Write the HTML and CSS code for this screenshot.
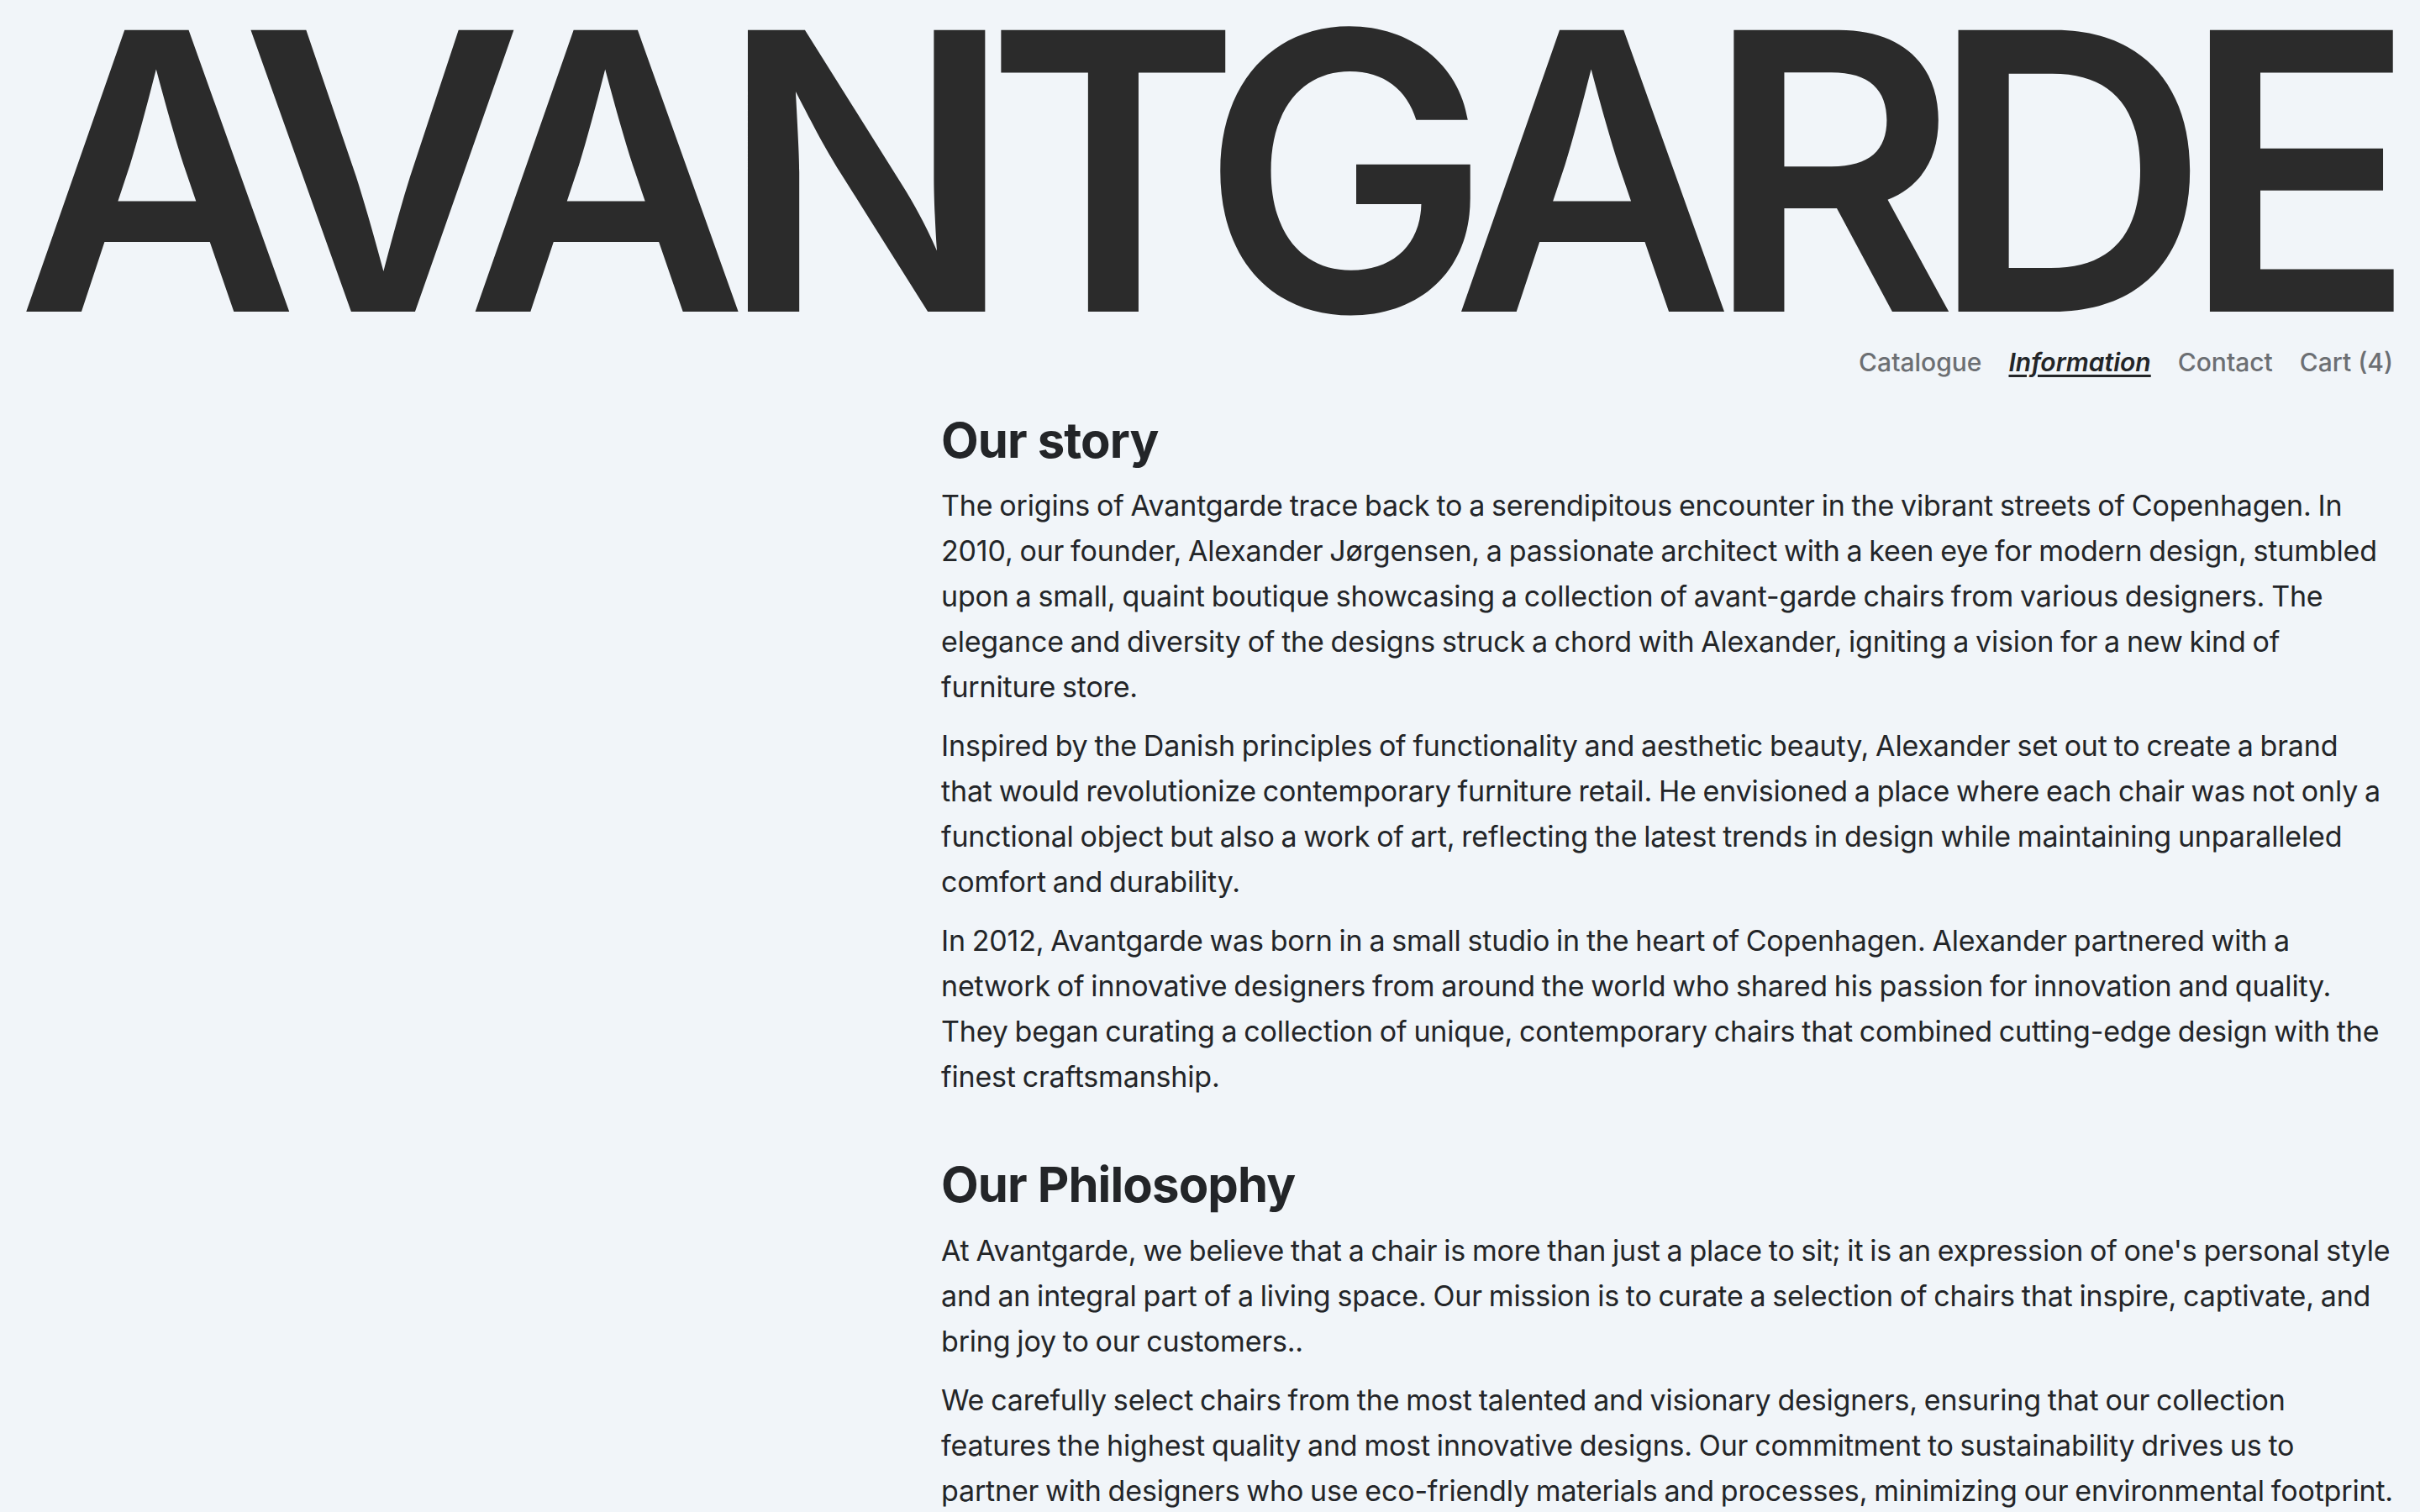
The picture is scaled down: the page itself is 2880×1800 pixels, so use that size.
FILE: index.html
```html
<!DOCTYPE html>
<html lang="en">
<head>
<meta charset="utf-8">
<title>Avantgarde — Information</title>
<link rel="stylesheet" href="styles.css">
</head>
<body>
<header class="site-header">
  <h1 class="brand">AVANTGARDE</h1>
  <nav class="nav">
    <a class="nav-link" href="#">Catalogue</a>
    <a class="nav-link is-active" href="#">Information</a>
    <a class="nav-link" href="#">Contact</a>
    <a class="nav-link" href="#">Cart (4)</a>
  </nav>
</header>
<main class="layout">
  <div class="layout-side"></div>
  <article class="content">
    <section class="block">
      <h2 class="block-title">Our story</h2>
      <p>The origins of Avantgarde trace back to a serendipitous encounter in the vibrant streets of Copenhagen. In 2010, our founder, Alexander Jørgensen, a passionate architect with a keen eye for modern design, stumbled upon a small, quaint boutique showcasing a collection of avant-garde chairs from various designers. The elegance and diversity of the designs struck a chord with Alexander, igniting a vision for a new kind of furniture store.</p>
      <p>Inspired by the Danish principles of functionality and aesthetic beauty, Alexander set out to create a brand that would revolutionize contemporary furniture retail. He envisioned a place where each chair was not only a functional object but also a work of art, reflecting the latest trends in design while maintaining unparalleled comfort and durability.</p>
      <p>In 2012, Avantgarde was born in a small studio in the heart of Copenhagen. Alexander partnered with a network of innovative designers from around the world who shared his passion for innovation and quality. They began curating a collection of unique, contemporary chairs that combined cutting-edge design with the finest craftsmanship.</p>
    </section>
    <section class="block">
      <h2 class="block-title">Our Philosophy</h2>
      <p>At Avantgarde, we believe that a chair is more than just a place to sit; it is an expression of one's personal style and an integral part of a living space. Our mission is to curate a selection of chairs that inspire, captivate, and bring joy to our customers..</p>
      <p>We carefully select chairs from the most talented and visionary designers, ensuring that our collection features the highest quality and most innovative designs. Our commitment to sustainability drives us to partner with designers who use eco-friendly materials and processes, minimizing our environmental footprint.</p>
    </section>
  </article>
</main>
</body>
</html>
```
FILE: styles.css
```css
* { box-sizing: border-box; }

html, body {
  margin: 0;
  background: #f1f5f9;
}

body {
  padding: 0 32px;
  font-family: Inter, "Noto Sans", sans-serif;
  font-size: 34px;
  line-height: 54px;
  color: #232528;
}

.site-header {
  display: flex;
  flex-direction: column;
}

.brand {
  margin: 0 0 0 -12px;
  padding-top: 8px;
  font-size: 460.8px;
  line-height: 0.85;
  font-weight: 600;
  letter-spacing: -0.0725em;
  color: #2b2b2b;
  white-space: nowrap;
}

.nav {
  display: flex;
  justify-content: flex-end;
  gap: 32px;
  margin-top: 4px;
  font-size: 30px;
}

.nav-link {
  color: #6c6f73;
  font-weight: 500;
  text-decoration: none;
}

.nav-link.is-active {
  color: #232528;
  font-style: italic;
  font-weight: 600;
  text-decoration: underline;
  text-decoration-thickness: 3px;
  text-underline-offset: 4px;
}

.layout {
  display: grid;
  grid-template-columns: minmax(0, 1fr) 60vw;
  padding-top: 32px;
}

.block + .block {
  margin-top: 67px;
}

.block-title {
  margin: 0 0 16px;
  font-size: 58px;
  line-height: 1.2;
  font-weight: 700;
  letter-spacing: -0.015em;
  color: #232528;
}

.content p {
  margin: 0;
  letter-spacing: -0.17px;
  word-spacing: -1.5px;
}

.content p + p {
  margin-top: 16px;
}
```
